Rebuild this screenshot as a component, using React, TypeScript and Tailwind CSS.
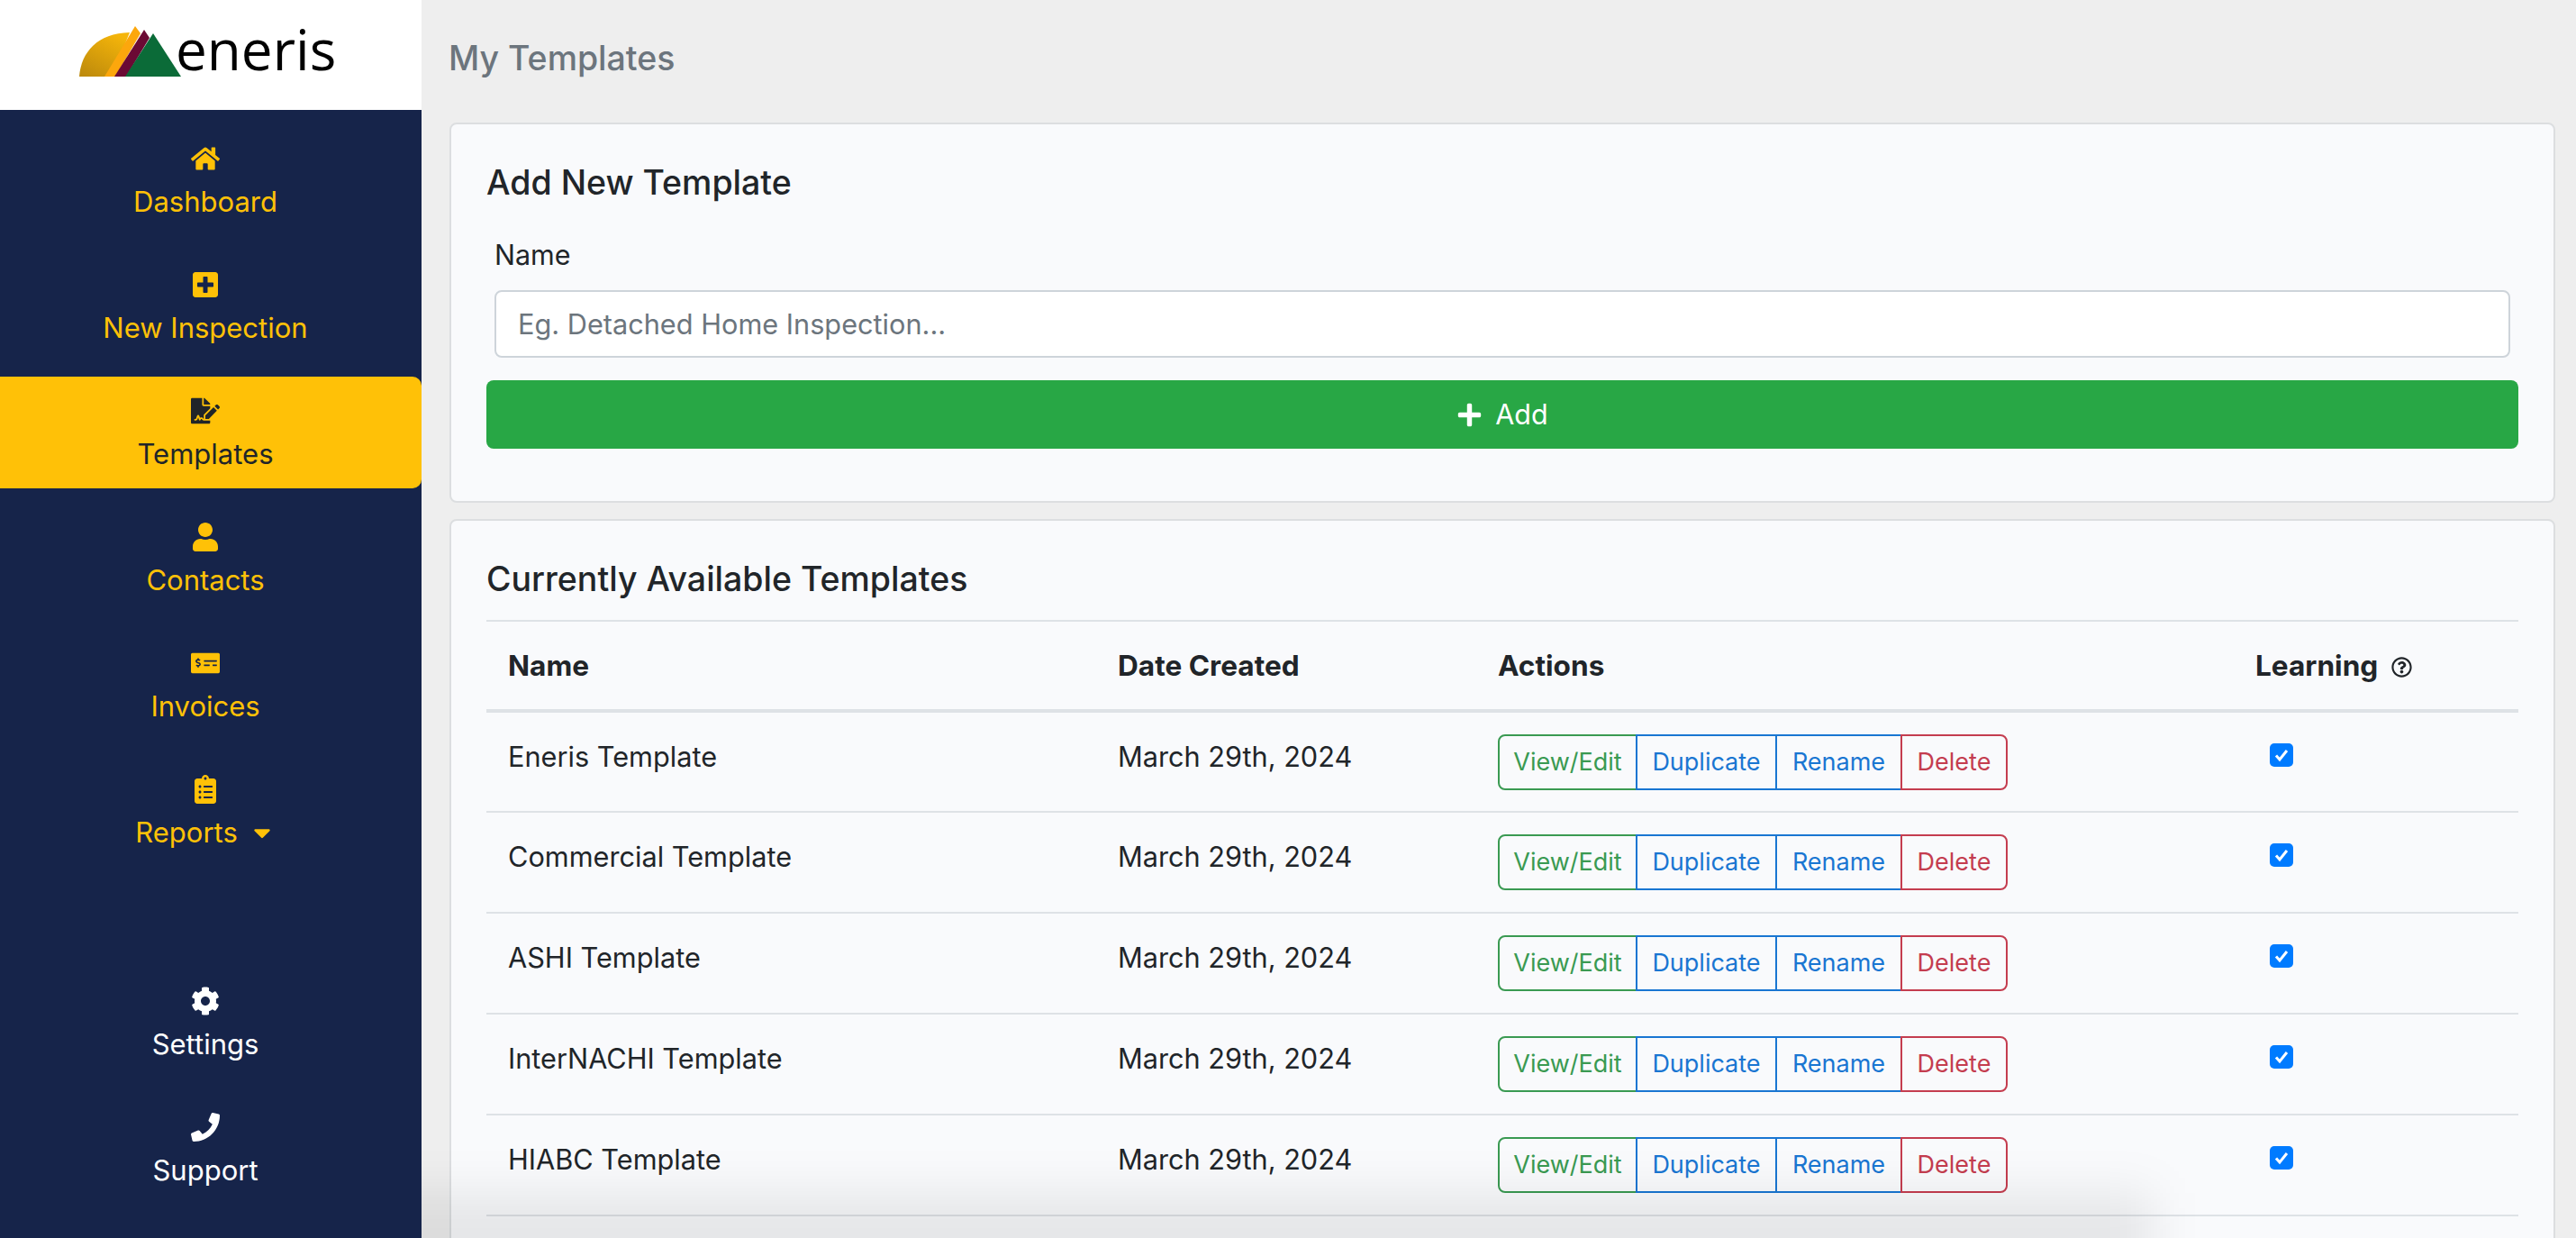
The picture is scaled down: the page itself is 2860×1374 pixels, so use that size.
import React from 'react';
import {
  FaHome,
  FaPlusSquare,
  FaFileSignature,
  FaUser,
  FaMoneyCheckAlt,
  FaClipboardList,
  FaCaretDown,
  FaCog,
  FaPhone,
  FaPlus,
  FaRegQuestionCircle,
} from 'react-icons/fa';

const sans = 'font-["Inter","Liberation_Sans",sans-serif]';

function Logo() {
  return (
    <div className="h-[122px] bg-white flex items-start relative">
      <svg className="absolute left-[88px] top-[28px]" width="114" height="58" viewBox="0 0 114 58">
        <defs>
          <linearGradient id="sun" x1="0.7" y1="0" x2="0.1" y2="1">
            <stop offset="0" stopColor="#f5b50a" />
            <stop offset="1" stopColor="#bd8a0c" />
          </linearGradient>
        </defs>
        <path d="M0 57 C2 30 20 9 56 8 L36 57 Z" fill="url(#sun)" />
        <path d="M28 57 L62 1 L68 9 L40 57 Z" fill="#fca70c" />
        <path d="M39 57 L72 5 L78 14 L52 57 Z" fill="#6b0a34" />
        <path d="M51 57 L82 9 L113 57 Z" fill="#0b6b38" />
      </svg>
      <span className='absolute left-[195px] top-[12px] text-[62px] leading-[84px] text-black font-["Open_Sans",sans-serif]'>
        eneris
      </span>
    </div>
  );
}

function NavItem({
  icon,
  label,
  active,
  white,
  caret,
}: {
  icon: React.ReactNode;
  label: string;
  active?: boolean;
  white?: boolean;
  caret?: boolean;
}) {
  let color = 'text-[#ffc107]';
  if (white) color = 'text-white';
  if (active) color = 'text-[#212529] bg-[#ffc107] rounded-r-[10px]';
  return (
    <div className={`h-[124px] w-full flex flex-col items-center pt-[22px] pr-[12px] ${color}`}>
      <div className="h-[32px] flex items-center justify-center text-[32px]">{icon}</div>
      <div className="mt-[10px] flex items-center text-[31px] leading-[44px]">
        {label}
        {caret && <FaCaretDown className="ml-[12px] text-[30px]" />}
      </div>
    </div>
  );
}

function Sidebar() {
  return (
    <aside className="w-[468px] shrink-0 h-full flex flex-col bg-[#16244a]">
      <Logo />
      <nav className="flex-1 flex flex-col justify-between pt-[16px] pb-[37px]">
        <div className="flex flex-col gap-[16px]">
          <NavItem icon={<FaHome />} label="Dashboard" />
          <NavItem icon={<FaPlusSquare />} label="New Inspection" />
          <NavItem icon={<FaFileSignature />} label="Templates" active />
          <NavItem icon={<FaUser />} label="Contacts" />
          <NavItem icon={<FaMoneyCheckAlt />} label="Invoices" />
          <NavItem icon={<FaClipboardList />} label="Reports" caret />
        </div>
        <div className="flex flex-col gap-[16px]">
          <NavItem icon={<FaCog />} label="Settings" white />
          <NavItem icon={<FaPhone />} label="Support" white />
        </div>
      </nav>
    </aside>
  );
}

const templates = [
  'Eneris Template',
  'Commercial Template',
  'ASHI Template',
  'InterNACHI Template',
  'HIABC Template',
];

function Actions() {
  const btn = 'h-[62px] flex items-center justify-center border-2 text-[27px] bg-transparent';
  return (
    <div className="flex">
      <button className={`${btn} w-[155px] rounded-l-[8px] border-[#3a9a52] text-[#3a9a52]`}>View/Edit</button>
      <button className={`${btn} w-[157px] -ml-[2px] border-[#1976d2] text-[#1976d2]`}>Duplicate</button>
      <button className={`${btn} w-[141px] -ml-[2px] border-[#1976d2] text-[#1976d2]`}>Rename</button>
      <button className={`${btn} w-[119px] -ml-[2px] rounded-r-[8px] border-[#c43d4f] text-[#c43d4f]`}>Delete</button>
    </div>
  );
}

function Checkbox() {
  return (
    <div className="w-[26px] h-[26px] ml-[16px] rounded-[5px] bg-[#007bff] flex items-center justify-center">
      <svg width="20" height="20" viewBox="0 0 20 20">
        <path d="M4 10.5 L8 15 L16 5" fill="none" stroke="white" strokeWidth="3" />
      </svg>
    </div>
  );
}

export default function App() {
  return (
    <div className={`flex w-full h-screen overflow-hidden bg-[#eeeeee] text-[#212529] ${sans}`}>
      <Sidebar />
      <main className="flex-1 min-w-0 h-full overflow-hidden relative pl-[31px] pr-[23px] pt-[43px]">
        <h1 className="text-[37.5px] leading-[44px] font-medium text-[#6c757d] mb-[49px] -ml-[1px]">My Templates</h1>

        <section className="h-[422px] border-2 border-[#dcdee0] rounded-[8px] bg-[#f9fafc] px-[39px] pt-[43px] mb-[18px]">
          <h2 className="text-[37.5px] leading-[44px] font-medium">Add New Template</h2>
          <div className="px-[9px]">
            <label className="block mt-[36px] text-[30.5px] leading-[44px]">Name</label>
            <input
              className="block mt-[17px] w-full h-[75px] px-[24px] rounded-[8px] border-2 border-[#ced4da] bg-white text-[30.7px] placeholder:text-[#6c757d]"
              placeholder="Eg. Detached Home Inspection..."
            />
          </div>
          <button className="mt-[25px] w-full h-[76px] rounded-[8px] bg-[#28a745] text-white text-[30.5px] flex items-center justify-center gap-[14px]">
            <FaPlus className="text-[29px]" />
            Add
          </button>
        </section>

        <section className="h-[900px] border-2 border-[#dcdee0] rounded-[8px] bg-[#f9fafc] px-[39px] pt-[43px]">
          <h2 className="text-[37.5px] leading-[44px] font-medium mb-[23px]">Currently Available Templates</h2>
          <table className="w-full table-fixed border-collapse text-[30.7px] leading-[44px]">
            <colgroup>
              <col className="w-[677px]" />
              <col className="w-[422px]" />
              <col className="w-[841px]" />
              <col />
            </colgroup>
            <thead>
              <tr className="h-[100px] border-t-2 border-b-4 border-[#dee2e6] text-[31.6px]">
                <th className="px-[24px] text-left font-bold">Name</th>
                <th className="px-[24px] text-left font-bold">Date Created</th>
                <th className="px-[24px] text-left font-bold">Actions</th>
                <th className="px-[24px] text-left font-bold whitespace-nowrap">
                  <span className="inline-flex items-center gap-[15px]">
                    Learning
                    <FaRegQuestionCircle className="text-[23px] mt-[3px]" />
                  </span>
                </th>
              </tr>
            </thead>
            <tbody>
              {templates.map((name) => (
                <tr key={name} className="h-[112px] border-b-2 border-[#dee2e6]">
                  <td className="px-[24px] pt-[27px] align-top">{name}</td>
                  <td className="px-[24px] pt-[27px] align-top">March 29th, 2024</td>
                  <td className="px-[24px] pt-[24px] align-top">
                    <Actions />
                  </td>
                  <td className="px-[24px] pt-[34px] align-top">
                    <Checkbox />
                  </td>
                </tr>
              ))}
            </tbody>
          </table>
        </section>
        <div className="absolute -left-[80px] right-[470px] -bottom-[40px] h-[90px] bg-black/8 blur-[26px]" />
      </main>
    </div>
  );
}
